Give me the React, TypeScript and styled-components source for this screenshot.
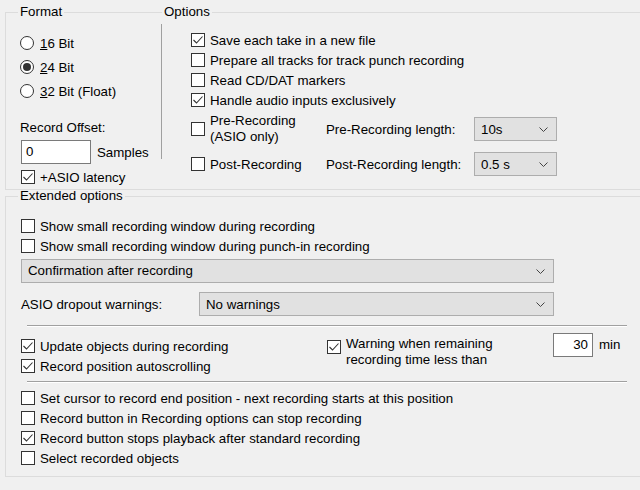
import React from "react";
import styled, { createGlobalStyle } from "styled-components";

const GlobalStyle = createGlobalStyle`
  html, body {
    margin: 0;
    padding: 0;
    background: #f0f0f0;
  }
  body {
    font-family: "Liberation Sans", Arial, sans-serif;
    font-size: 13.3px;
    color: #000;
    overflow: hidden;
  }
`;

const Dialog = styled.div`
  width: 660px;
  padding: 4px 0 0 5px;
`;

const TopRow = styled.div`
  display: flex;
`;

const Group = styled.fieldset<{ $w?: number; $open?: boolean }>`
  margin: 0;
  padding: 0;
  min-width: 0;
  border: 1px solid #dcdcdc;
  ${(p) => (p.$open ? "border-left: none;" : "border-right: none;")}
  ${(p) => (p.$w ? `width: ${p.$w}px;` : "flex: 1;")}
`;

const Legend = styled.legend<{ $x: number }>`
  margin-left: ${(p) => p.$x}px;
  padding: 0 2px;
  line-height: 16px;
`;

const FormatBody = styled.div`
  padding: 11px 0 2px 14px;
`;

const RadioRow = styled.label`
  display: flex;
  align-items: center;
  height: 24px;
  gap: 6px;
`;

const RadioDot = styled.span<{ $on?: boolean }>`
  box-sizing: border-box;
  width: 14px;
  height: 14px;
  border-radius: 50%;
  border: 1px solid #333;
  background: #fff;
  display: flex;
  align-items: center;
  justify-content: center;
  &::after {
    content: "";
    display: ${(p) => (p.$on ? "block" : "none")};
    width: 8px;
    height: 8px;
    border-radius: 50%;
    background: #333;
  }
`;

const Caption = styled.div<{ $mt?: number }>`
  line-height: 16px;
  margin-top: ${(p) => p.$mt ?? 0}px;
`;

const InputRow = styled.div`
  display: flex;
  align-items: center;
  gap: 6px;
  margin: 4px 0 0 1px;
`;

const TextBox = styled.div<{ $w: number; $right?: boolean }>`
  box-sizing: border-box;
  width: ${(p) => p.$w}px;
  height: 24px;
  background: #fff;
  border: 1px solid #7a7a7a;
  line-height: 22px;
  padding: 0 4px;
  text-align: ${(p) => (p.$right ? "right" : "left")};
`;

const CheckRow = styled.label<{ $mt?: number; $x?: number }>`
  display: flex;
  align-items: center;
  gap: 5px;
  height: 20px;
  margin-top: ${(p) => p.$mt ?? 0}px;
  margin-left: ${(p) => p.$x ?? 0}px;
  white-space: nowrap;
`;

const Box = styled.span`
  box-sizing: border-box;
  flex: none;
  width: 14px;
  height: 14px;
  border: 1px solid #333;
  background: #fff;
  display: flex;
  svg {
    display: block;
  }
`;

const OptionsBody = styled.div`
  margin: 4px 0 25px 10px;
  border-left: 1px solid #a0a0a0;
  padding: 6px 0 0 29px;
  height: 135px;
  box-sizing: border-box;
`;

const LengthGrid = styled.div`
  display: grid;
  grid-template-columns: 135px 148px 83px;
  grid-template-rows: 32px 24px;
  row-gap: 7px;
  align-items: center;
  margin-top: 3px;
`;

const TwoLine = styled.div`
  line-height: 16px;
`;

const CheckTop = styled.div`
  display: flex;
  align-items: center;
  gap: 5px;
`;

const Select = styled.div<{ $w: number }>`
  box-sizing: border-box;
  width: ${(p) => p.$w}px;
  height: 24px;
  background: #e1e1e1;
  border: 1px solid #adadad;
  display: flex;
  align-items: center;
  justify-content: space-between;
  padding: 0 8px 0 6px;
`;

const ExtendedGroup = styled(Group)`
  margin-top: -2px;
  height: 287px;
`;

const ExtBody = styled.div`
  padding: 12px 0 0 15px;
`;

const DropoutRow = styled.div`
  display: flex;
  align-items: center;
  margin-top: 9px;
`;

const DropoutLabel = styled.span`
  width: 178px;
`;

const Rule = styled.div<{ $mt: number }>`
  width: 600px;
  margin: ${(p) => p.$mt}px 0 0 6px;
  border-top: 1px solid #a0a0a0;
  border-bottom: 1px solid #fff;
`;

const WarnGrid = styled.div`
  display: grid;
  grid-template-columns: 306px 226px 40px auto;
  margin-top: 6px;
  height: 48px;
`;

const LeftChecks = styled.div`
  padding-top: 3px;
`;

const WarnCheck = styled.div`
  display: flex;
  align-items: flex-start;
  gap: 5px;
  padding-top: 3px;
  ${Box} {
    margin-top: 4px;
  }
`;

const MinLabel = styled.span`
  line-height: 24px;
  padding-left: 6px;
`;

const Tail = styled.div`
  margin-top: 5px;
`;

const Check = ({ on }: { on?: boolean }) => (
  <Box>
    {on && (
      <svg width="12" height="12" viewBox="0 0 12 12">
        <path d="M1.5 6 L4.5 9 L10.5 2.5" fill="none" stroke="#333" strokeWidth="1.1" />
      </svg>
    )}
  </Box>
);

const Chevron = () => (
  <svg width="9" height="5" viewBox="0 0 9 5">
    <path d="M0.5 0.5 L4.5 4.5 L8.5 0.5" fill="none" stroke="#444" strokeWidth="1" />
  </svg>
);

const Dropdown = ({ w, value }: { w: number; value: string }) => (
  <Select $w={w}>
    <span>{value}</span>
    <Chevron />
  </Select>
);

const CheckItem = ({ on, text, mt, x }: { on?: boolean; text: string; mt?: number; x?: number }) => (
  <CheckRow $mt={mt} $x={x}>
    <Check on={on} />
    <span>{text}</span>
  </CheckRow>
);

export default function App() {
  return (
    <>
      <GlobalStyle />
      <Dialog>
        <TopRow>
          <Group $w={145}>
            <Legend $x={12}>Format</Legend>
            <FormatBody>
              <RadioRow>
                <RadioDot />
                <span>
                  <u>1</u>6 Bit
                </span>
              </RadioRow>
              <RadioRow>
                <RadioDot $on />
                <span>
                  <u>2</u>4 Bit
                </span>
              </RadioRow>
              <RadioRow>
                <RadioDot />
                <span>
                  <u>3</u>2 Bit (Float)
                </span>
              </RadioRow>
              <Caption $mt={17}>Record Offset:</Caption>
              <InputRow>
                <TextBox $w={70}>0</TextBox>
                <span>Samples</span>
              </InputRow>
              <CheckItem on text="+ASIO latency" mt={3} x={1} />
            </FormatBody>
          </Group>
          <Group $open>
            <Legend $x={11}>Options</Legend>
            <OptionsBody>
              <CheckItem on text="Save each take in a new file" />
              <CheckItem text="Prepare all tracks for track punch recording" />
              <CheckItem text="Read CD/DAT markers" />
              <CheckItem on text="Handle audio inputs exclusively" />
              <LengthGrid>
                <CheckTop>
                  <Check />
                  <TwoLine>
                    Pre-Recording
                    <br />
                    (ASIO only)
                  </TwoLine>
                </CheckTop>
                <span>Pre-Recording length:</span>
                <Dropdown w={83} value="10s" />
                <CheckTop>
                  <Check />
                  <span>Post-Recording</span>
                </CheckTop>
                <span>Post-Recording length:</span>
                <Dropdown w={83} value="0.5 s" />
              </LengthGrid>
            </OptionsBody>
          </Group>
        </TopRow>

        <ExtendedGroup>
          <Legend $x={12}>Extended options</Legend>
          <ExtBody>
            <CheckItem text="Show small recording window during recording" />
            <CheckItem text="Show small recording window during punch-in recording" />
            <Caption $mt={3}>
              <Dropdown w={533} value="Confirmation after recording" />
            </Caption>
            <DropoutRow>
              <DropoutLabel>ASIO dropout warnings:</DropoutLabel>
              <Dropdown w={355} value="No warnings" />
            </DropoutRow>
            <Rule $mt={9} />
            <WarnGrid>
              <LeftChecks>
                <CheckItem on text="Update objects during recording" />
                <CheckItem on text="Record position autoscrolling" />
              </LeftChecks>
              <WarnCheck>
                <Check on />
                <TwoLine>
                  Warning when remaining
                  <br />
                  recording time less than
                </TwoLine>
              </WarnCheck>
              <TextBox $w={40} $right>
                30
              </TextBox>
              <MinLabel>min</MinLabel>
            </WarnGrid>
            <Rule $mt={0} />
            <Tail>
              <CheckItem text="Set cursor to record end position - next recording starts at this position" />
              <CheckItem text="Record button in Recording options can stop recording" />
              <CheckItem on text="Record button stops playback after standard recording" />
              <CheckItem text="Select recorded objects" />
            </Tail>
          </ExtBody>
        </ExtendedGroup>
      </Dialog>
    </>
  );
}
